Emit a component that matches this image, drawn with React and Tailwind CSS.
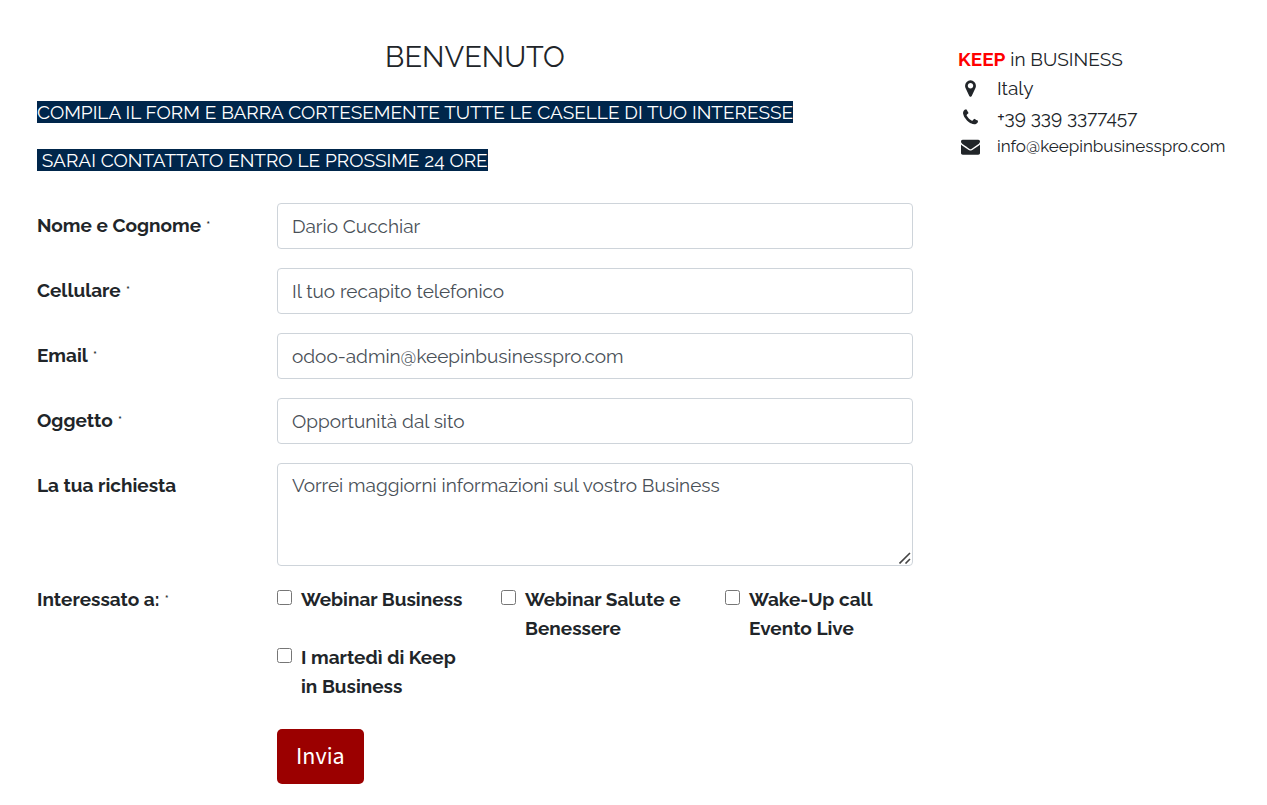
import React, { useState } from "react";

const inputStyle =
  "w-full rounded-[4px] border border-[#ced4da] bg-white px-[14px] text-[19px] leading-[29px] text-[#495057] placeholder:text-[#495057] placeholder:opacity-100 focus:outline-none focus:border-[#001f45]";

const interests = [
  "Webinar Business",
  "Webinar Salute e Benessere",
  "Wake-Up call Evento Live",
  "I martedì di Keep in Business",
];

function Row({ id, label, required, children }) {
  return (
    <div className="flex">
      <label htmlFor={id} className="w-60 shrink-0 pt-2 font-bold">
        {label}
        {required && (
          <span className="ml-[5px] text-[14px] font-normal">*</span>
        )}
      </label>
      <div className="relative flex min-w-0 flex-1">{children}</div>
    </div>
  );
}

function Icon({ path }) {
  return (
    <svg
      viewBox="0 0 1792 1792"
      className="h-[19px] w-[19px] fill-current"
      aria-hidden="true"
    >
      <path d={path} />
    </svg>
  );
}

const markerPath =
  "M1152 640q0-106-75-181t-181-75-181 75-75 181 75 181 181 75 181-75 75-181zm256 0q0 109-33 179l-364 774q-16 33-47.5 52t-67.5 19-67.5-19-46.5-52l-365-774q-33-70-33-179 0-212 150-362t362-150 362 150 150 362z";
const phonePath =
  "M1600 1240q0 27-10 70.5t-21 68.5q-21 50-122 106-94 51-186 51-27 0-53-3.5t-57.5-12.5-47-14.5-55.5-20.5-49-18q-98-35-175-83-127-79-264-216t-216-264q-48-77-83-175-3-9-18-49t-20.5-55.5-14.5-47-12.5-57.5-3.5-53q0-92 51-186 56-101 106-122 25-11 68.5-21t70.5-10q14 0 21 3 18 6 53 76 11 19 30 54t35 63.5 31 53.5q3 4 17.5 25t21.5 35.5 7 28.5q0 20-28.5 50t-62 55-62 53-28.5 46q0 9 5 22.5t8.5 20.5 14 24 11.5 19q76 137 174 235t235 174q2 1 19 11.5t24 14 20.5 8.5 22.5 5q18 0 46-28.5t53-62 55-62 50-28.5q14 0 28.5 7t35.5 21.5 25 17.5q25 15 53.5 31t63.5 35 54 30q70 35 76 53 3 7 3 21z";
const envelopePath =
  "M1792 710v794q0 66-47 113t-113 47h-1472q-66 0-113-47t-47-113v-794q44 49 101 87 362 246 497 345 57 42 92.5 65.5t94.5 48 110 24.5h2q51 0 110-24.5t94.5-48 92.5-65.5q170-123 498-345 57-39 100-87zm0-294q0 79-49 151t-122 123q-376 261-468 325-10 7-42.5 31t-54 38.5-52 32.5-57.5 27-50 9h-2q-23 0-50-9t-57.5-27-52-32.5-54-38.5-42.5-31q-91-64-262-182.5t-205-142.5q-62-42-117-115.5t-55-136.5q0-78 41.5-130t118.5-52h1472q65 0 112.5 47t47.5 113z";

function App() {
  const [form, setForm] = useState({
    name: "Dario Cucchiar",
    phone: "",
    email: "odoo-admin@keepinbusinesspro.com",
    subject: "Opportunità dal sito",
    message: "Vorrei maggiorni informazioni sul vostro Business",
  });
  const [selected, setSelected] = useState([]);

  const handleChange = (e) => {
    setForm({ ...form, [e.target.name]: e.target.value });
  };

  const toggleInterest = (item) => {
    setSelected(
      selected.includes(item)
        ? selected.filter((i) => i !== item)
        : [...selected, item]
    );
  };

  return (
    <div className="flex gap-[45px] bg-white px-[37px] pt-[39px] font-['Raleway','Lato',sans-serif] text-[19px] leading-[29px] text-[#212529]">
      <main className="min-w-0 flex-1">
        <h1 className="text-center text-[29px] leading-9">BENVENUTO</h1>
        <p className="mt-[23px]">
          <span className="bg-[#00264b] text-white">
            COMPILA IL FORM E BARRA CORTESEMENTE TUTTE LE CASELLE DI TUO
            INTERESSE
          </span>
        </p>
        <p className="mt-[19px]">
          <span className="bg-[#00264b] text-white">
            &nbsp;SARAI CONTATTATO ENTRO LE PROSSIME 24 ORE
          </span>
        </p>

        <form
          className="mt-7 flex flex-col gap-[19px]"
          onSubmit={(e) => e.preventDefault()}
        >
          <Row id="name" label="Nome e Cognome" required>
            <input
              type="text"
              id="name"
              name="name"
              value={form.name}
              onChange={handleChange}
              className={`${inputStyle} h-[46px]`}
            />
          </Row>
          <Row id="phone" label="Cellulare" required>
            <input
              type="tel"
              id="phone"
              name="phone"
              placeholder="Il tuo recapito telefonico"
              value={form.phone}
              onChange={handleChange}
              className={`${inputStyle} h-[46px]`}
            />
          </Row>
          <Row id="email" label="Email" required>
            <input
              type="email"
              id="email"
              name="email"
              value={form.email}
              onChange={handleChange}
              className={`${inputStyle} h-[46px]`}
            />
          </Row>
          <Row id="subject" label="Oggetto" required>
            <input
              type="text"
              id="subject"
              name="subject"
              value={form.subject}
              onChange={handleChange}
              className={`${inputStyle} h-[46px]`}
            />
          </Row>
          <Row id="message" label="La tua richiesta">
            <textarea
              id="message"
              name="message"
              value={form.message}
              onChange={handleChange}
              className={`${inputStyle} h-[103px] resize-y py-[7px] [&::-webkit-resizer]:bg-transparent`}
            />
            {/* Resize grip */}
            <svg
              viewBox="0 0 12 12"
              className="pointer-events-none absolute right-[2px] bottom-[2px] h-3 w-3 stroke-[#444] [stroke-width:1.6]"
              aria-hidden="true"
            >
              <path d="M0.5 11.5L11 1M6.5 11.5L11 7" fill="none" />
            </svg>
          </Row>

          <fieldset className="flex font-bold">
            <legend className="float-left w-60 shrink-0">
              Interessato a:
              <span className="ml-[5px] text-[14px] font-normal">*</span>
            </legend>
            <div className="grid min-w-0 flex-1 grid-cols-3 gap-x-9">
              {interests.map((item) => (
                <label key={item} className="flex items-start gap-[9px]">
                  <input
                    type="checkbox"
                    checked={selected.includes(item)}
                    onChange={() => toggleInterest(item)}
                    className="mt-[5px] h-[15px] w-[15px] shrink-0"
                  />
                  {item}
                </label>
              ))}
            </div>
          </fieldset>

          <button
            type="submit"
            className="mt-[9px] ml-60 h-[55px] self-start rounded-[5px] bg-[#9b0000] px-[19px] font-['Source_Sans_Pro','Source_Sans_3','Noto_Sans',sans-serif] text-[24px] leading-8 text-white hover:bg-[#7d0000]"
          >
            Invia
          </button>
        </form>
      </main>

      <aside className="w-[272px] shrink-0 pt-[6px]">
        <p>
          <strong className="text-[#ff0000]">KEEP</strong> in BUSINESS
        </p>
        <ul>
          <li className="flex items-center gap-[15px]">
            <span className="flex w-6 justify-center">
              <Icon path={markerPath} />
            </span>
            Italy
          </li>
          <li className="flex items-center gap-[15px]">
            <span className="flex w-6 justify-center">
              <Icon path={phonePath} />
            </span>
            +39 339 3377457
          </li>
          <li className="flex items-center gap-[15px]">
            <span className="flex w-6 justify-center">
              <Icon path={envelopePath} />
            </span>
            <a href="mailto:info@keepinbusinesspro.com" className="text-[17px]">
              info@keepinbusinesspro.com
            </a>
          </li>
        </ul>
      </aside>
    </div>
  );
}

export default App;
